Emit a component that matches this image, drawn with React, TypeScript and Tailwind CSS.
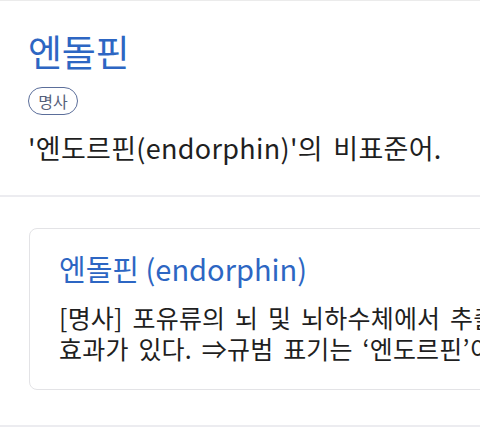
export default function App() {
  const font = { fontFamily: "'Noto Sans CJK KR', 'Noto Sans', sans-serif" };
  return (
    <div className="w-[480px] h-[427px] overflow-hidden bg-white" style={font}>
      {/* ── Headword ─────────────────────────── */}
      <div className="border-t border-[#ebebeb] pl-[28px] pt-[24px] h-[195px]">
        <h1 className="text-[37px] leading-[52px] text-[#2d66c3] tracking-[-0.3px]">엔돌핀</h1>
        <div className="mt-[10px] flex w-[50px] h-[28px] items-center justify-center rounded-full border-[1.5px] border-[#5b6e9a] text-[16px] leading-none text-[#55607a]">
          명사
        </div>
        <p className="mt-[14px] text-[27px] leading-[38px] tracking-[0.3px] [word-spacing:4px] text-[#1f1f1f] whitespace-nowrap">
          '엔도르핀(endorphin)'의 비표준어.
        </p>
      </div>

      {/* ── Related entry ────────────────────── */}
      <div className="border-t-2 border-[#ececf0] pt-[31px] h-[230px]">
        <div className="ml-[29px] w-[700px] h-[162px] rounded-[8px] border border-[#e3e3e6] pl-[29px] pt-[20px]">
          <p className="text-[29px] leading-[38px] text-[#2d66c3] whitespace-nowrap">엔돌핀 (endorphin)</p>
          <p className="mt-[15px] text-[25px] leading-[31px] tracking-[0.2px] [word-spacing:4px] text-[#1f1f1f] whitespace-nowrap">
            [명사] 포유류의 뇌 및 뇌하수체에서 추출되는 모르핀 같은 진통
            <br />
            효과가 있다. ⇒규범 표기는 ‘엔도르핀’이다.
          </p>
        </div>
        <div className="mt-[35px] h-[2px] bg-[#ececf0]" />
      </div>
    </div>
  );
}
